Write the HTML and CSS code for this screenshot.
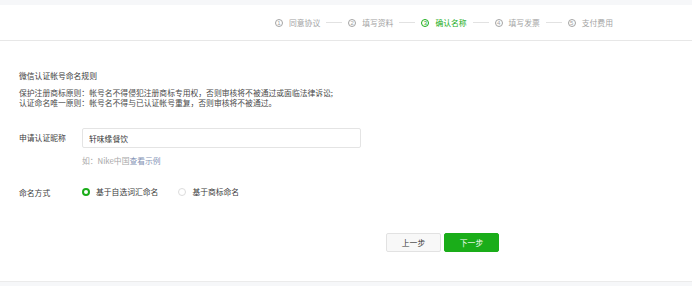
FILE: index.html
```html
<!DOCTYPE html>
<html lang="zh-CN">
<head>
    <meta charset="UTF-8">
    <meta name="viewport" content="width=device-width, initial-scale=1.0">
    <title>确认名称</title>
    <link rel="stylesheet" href="styles.css">
</head>
<body>
    <div class="page">
        <!-- Steps -->
        <div class="steps">
            <div class="step"><span class="step-num">1</span>同意协议</div>
            <span class="step-line"></span>
            <div class="step"><span class="step-num">2</span>填写资料</div>
            <span class="step-line"></span>
            <div class="step active"><span class="step-num">3</span>确认名称</div>
            <span class="step-line"></span>
            <div class="step"><span class="step-num">4</span>填写发票</div>
            <span class="step-line"></span>
            <div class="step"><span class="step-num">5</span>支付费用</div>
        </div>

        <!-- Content -->
        <div class="content">
            <div class="rules">
                <h2 class="rules-title">微信认证帐号命名规则</h2>
                <p class="rules-text">保护注册商标原则：帐号名不得侵犯注册商标专用权，否则审核将不被通过或面临法律诉讼;</p>
                <p class="rules-text">认证命名唯一原则：帐号名不得与已认证帐号重复，否则审核将不被通过。</p>
            </div>

            <div class="form-row name-row">
                <label class="form-label">申请认证昵称</label>
                <div class="form-field">
                    <input type="text" class="input" value="轩味缘餐饮">
                    <p class="hint">如：Nike中国<a class="hint-link">查看示例</a></p>
                </div>
            </div>

            <div class="form-row mode-row">
                <label class="form-label">命名方式</label>
                <div class="radios">
                    <label class="radio checked"><span class="radio-dot"></span>基于自选词汇命名</label>
                    <label class="radio"><span class="radio-dot"></span>基于商标命名</label>
                </div>
            </div>

            <div class="actions">
                <button class="btn">上一步</button>
                <button class="btn btn-primary">下一步</button>
            </div>
        </div>
    </div>
</body>
</html>
```

FILE: styles.css
```css
* {
    margin: 0;
    padding: 0;
    box-sizing: border-box;
}

body {
    font-family: "Noto Sans CJK SC", "Noto Sans", sans-serif;
    font-size: 7.8px;
    color: #3a3a3a;
    background: #f6f7f9;
    padding-top: 5px;
    height: 286px;
}

.page {
    background: white;
    border-bottom: 1px solid #ebebeb;
}

/* Steps */
.steps {
    height: 36px;
    display: flex;
    align-items: center;
    padding-left: 275px;
    border-bottom: 1px solid #e7e7e7;
}

.step {
    display: flex;
    align-items: center;
    gap: 6px;
    color: #a3a3a3;
    line-height: 10px;
}

.step-num {
    width: 8px;
    height: 8px;
    border: 0.8px solid currentColor;
    border-radius: 50%;
    font-family: "Liberation Sans", sans-serif;
    font-size: 6px;
    line-height: 6.5px;
    text-align: center;
}

.step.active {
    color: #1aad19;
}

.step-line {
    width: 16px;
    height: 1px;
    background: #e2e2e2;
    margin: 0 6px;
}

/* Content */
.content {
    height: 240px;
    padding: 30px 0 0 19px;
}

.rules-title {
    font-size: 7.8px;
    font-weight: normal;
    line-height: 10px;
    margin-bottom: 7px;
}

.rules-text {
    line-height: 10px;
    color: #4a4a4a;
}

.form-row {
    display: grid;
    grid-template-columns: 63px 279px;
}

.name-row {
    margin-top: 20px;
}

.name-row .form-label {
    line-height: 20px;
}

.input {
    width: 100%;
    height: 20px;
    padding: 0 6px;
    font-family: inherit;
    font-size: 7.8px;
    color: #353535;
    border: 1px solid #e4e4e4;
    border-radius: 2px;
    outline: none;
}

.hint {
    margin-top: 8px;
    line-height: 10px;
    color: #a8a8a8;
}

.hint-link {
    color: #8493b5;
}

.mode-row {
    margin-top: 19px;
    align-items: center;
}

.mode-row .form-label {
    padding-top: 2px;
}

.radios {
    display: flex;
    align-items: center;
    gap: 20px;
    line-height: 10px;
}

.radio {
    display: flex;
    align-items: center;
    gap: 6px;
}

.radio-dot {
    width: 8px;
    height: 8px;
    border-radius: 50%;
    border: 1px solid #dcdcdc;
}

.radio.checked .radio-dot {
    border: 2.5px solid #1aad19;
}

/* Actions */
.actions {
    display: flex;
    gap: 3px;
    margin-top: 35px;
    padding-left: 367px;
}

.btn {
    width: 55px;
    height: 19px;
    font-family: inherit;
    font-size: 7.8px;
    color: #353535;
    background: #f8f8f8;
    border: 1px solid #e2e2e2;
    border-radius: 2px;
    cursor: pointer;
}

.btn-primary {
    color: white;
    background: #1aad19;
    border-color: #1aad19;
}
```
